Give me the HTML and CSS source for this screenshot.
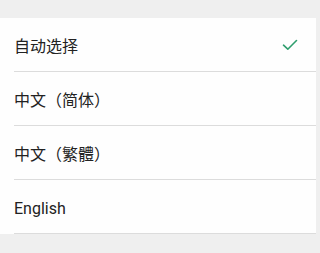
FILE: index.html
```html
<!DOCTYPE html>
<html>
<head>
<meta charset="utf-8">
<link rel="stylesheet" href="styles.css">
</head>
<body>
<div class="list">
  <div class="row"><div class="row-inner"><span class="label">自动选择</span>
    <svg class="check" width="16" height="12" viewBox="0 0 16 12"><path d="M1.5 6.2 L5.8 10.2 L14.5 1.5" fill="none" stroke="#2f9e6e" stroke-width="1.6" stroke-linecap="round" stroke-linejoin="round"/></svg>
  </div></div>
  <div class="row"><div class="row-inner"><span class="label">中文（简体）</span></div></div>
  <div class="row"><div class="row-inner"><span class="label">中文（繁體）</span></div></div>
  <div class="row"><div class="row-inner"><span class="label latin">English</span></div></div>
</div>
</body>
</html>
```

FILE: styles.css
```css
html, body {
  margin: 0;
  padding: 0;
  background: #efefef;
  width: 319px;
  height: 253px;
  overflow: hidden;
}
.list {
  margin-top: 18px;
  width: 316px;
  background: #fefefe;
}
.row {
  padding-left: 14px;
}
.row-inner {
  height: 54px;
  box-sizing: border-box;
  border-bottom: 1px solid #dcdcdc;
  display: flex;
  align-items: center;
  justify-content: space-between;
  padding-right: 18px;
}
.label {
  font-family: "Roboto", "Noto Sans CJK SC", sans-serif;
  font-size: 16px;
  color: #222;
}
.label.latin {
  padding-top: 3px;
}
.check {
  display: block;
}
```
